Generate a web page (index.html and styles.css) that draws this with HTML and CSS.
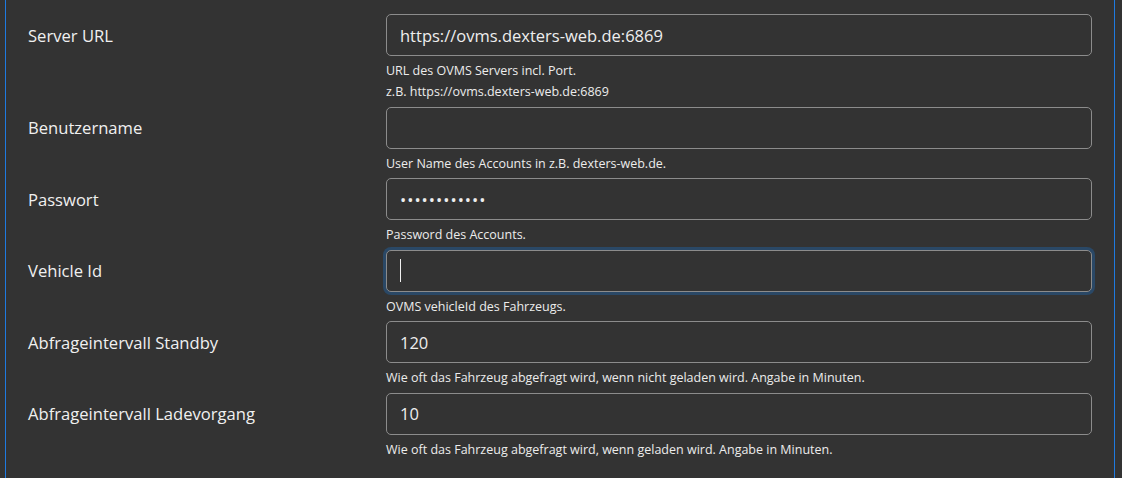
FILE: index.html
```html
<!DOCTYPE html>
<html lang="de">
<head>
<meta charset="utf-8">
<title>OVMS Einstellungen</title>
<link rel="stylesheet" href="styles.css">
</head>
<body>
<div class="panel">
  <form class="settings">
    <div class="row">
      <label class="label" for="url">Server URL</label>
      <div class="field">
        <input class="input" id="url" type="text" value="https://ovms.dexters-web.de:6869">
        <div class="help">URL des OVMS Servers incl. Port.<br>z.B. https://ovms.dexters-web.de:6869</div>
      </div>
    </div>
    <div class="row">
      <label class="label" for="user">Benutzername</label>
      <div class="field">
        <input class="input" id="user" type="text" value="">
        <div class="help">User Name des Accounts in z.B. dexters-web.de.</div>
      </div>
    </div>
    <div class="row">
      <label class="label" for="pw">Passwort</label>
      <div class="field">
        <input class="input password" id="pw" type="password" value="geheim123456">
        <div class="help">Password des Accounts.</div>
      </div>
    </div>
    <div class="row">
      <label class="label" for="vid">Vehicle Id</label>
      <div class="field">
        <div class="input-wrap">
          <input class="input focused" id="vid" type="text" value="">
          <span class="caret"></span>
        </div>
        <div class="help">OVMS vehicleId des Fahrzeugs.</div>
      </div>
    </div>
    <div class="row">
      <label class="label" for="standby">Abfrageintervall Standby</label>
      <div class="field">
        <input class="input" id="standby" type="text" value="120">
        <div class="help">Wie oft das Fahrzeug abgefragt wird, wenn nicht geladen wird. Angabe in Minuten.</div>
      </div>
    </div>
    <div class="row">
      <label class="label" for="charge">Abfrageintervall Ladevorgang</label>
      <div class="field">
        <input class="input" id="charge" type="text" value="10">
        <div class="help">Wie oft das Fahrzeug abgefragt wird, wenn geladen wird. Angabe in Minuten.</div>
      </div>
    </div>
  </form>
</div>
</body>
</html>
```
FILE: styles.css
```css
html, body {
  margin: 0;
  padding: 0;
  background: #333333;
  height: 100%;
}
body {
  font-family: "Open Sans", "Noto Sans", sans-serif;
  color: #ececec;
  overflow: hidden;
}
.panel {
  margin-left: 5px;
  width: 1108px;
  height: 100%;
  border-left: 1px solid #1f7ae0;
  border-right: 1px solid #1f7ae0;
  box-sizing: content-box;
}
.settings {
  padding: 14px 22px 0 22px;
  display: flex;
  flex-direction: column;
}
.row {
  display: grid;
  grid-template-columns: 358px 706px;
  padding-bottom: 4.5px;
}
.label {
  height: 42px;
  display: flex;
  align-items: center;
  font-size: 16.6px;
  color: #f0f0f0;
}
.field {
  display: flex;
  flex-direction: column;
}
.input-wrap {
  position: relative;
}
.input {
  display: block;
  box-sizing: border-box;
  width: 706px;
  height: 42px;
  margin: 0;
  padding: 0 13px;
  background: #333333;
  border: 1px solid #8c8c8c;
  border-radius: 5px;
  color: #eeeeee;
  font-family: "Open Sans", "Noto Sans", sans-serif;
  font-size: 16.5px;
  outline: none;
}
.input.password {
  letter-spacing: 1px;
}
.input.focused {
  box-shadow: 0 0 0 3px #2a4866;
}
.caret {
  position: absolute;
  left: 14px;
  top: 9px;
  width: 1px;
  height: 23px;
  background: #f0f0f0;
}
.help {
  margin-top: 4px;
  font-size: 12.5px;
  line-height: 21px;
  color: #ececec;
}
```
